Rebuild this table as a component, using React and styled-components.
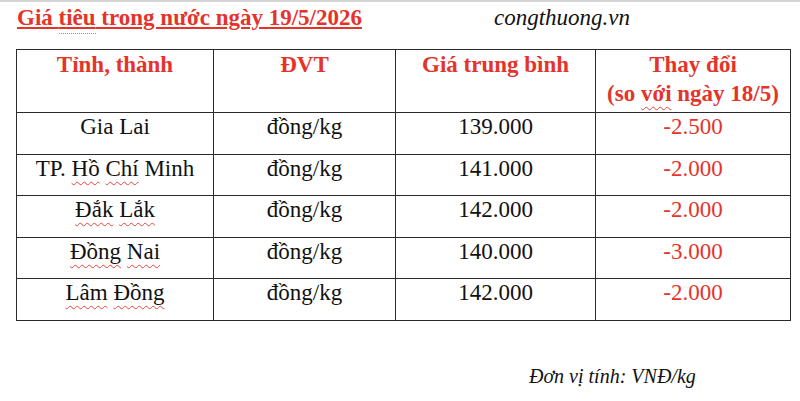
import React from "react";
import styled, { createGlobalStyle } from "styled-components";

const GlobalStyle = createGlobalStyle`
  html, body {
    margin: 0;
    padding: 0;
    background: #ffffff;
  }
  body {
    font-family: "Liberation Serif", "Times New Roman", serif;
  }
`;

const RED = "#e5332a";

const rows = [
  { place: [{ t: "Gia Lai" }], price: "139.000", change: "-2.500" },
  {
    place: [{ t: "TP. " }, { t: "Hồ", wavy: true }, { t: " " }, { t: "Chí", wavy: true }, { t: " Minh" }],
    price: "141.000",
    change: "-2.000",
  },
  {
    place: [{ t: "Đắk", wavy: true }, { t: " " }, { t: "Lắk", wavy: true }],
    price: "142.000",
    change: "-2.000",
  },
  {
    place: [{ t: "Đồng", wavy: true }, { t: " " }, { t: "Nai", wavy: true }],
    price: "140.000",
    change: "-3.000",
  },
  {
    place: [{ t: "Lâm", wavy: true }, { t: " " }, { t: "Đồng", wavy: true }],
    price: "142.000",
    change: "-2.000",
  },
];

const App = () => {
  return (
    <>
      <GlobalStyle />
      <Page>
        <TopBar>
          <Title>
            Giá <Dotted>tiêu</Dotted> trong nước ngày 19/5/2026
          </Title>
          <Site>congthuong.vn</Site>
        </TopBar>

        <Table>
          <colgroup>
            <col style={{ width: 197 }} />
            <col style={{ width: 182 }} />
            <col style={{ width: 200 }} />
            <col style={{ width: 195 }} />
          </colgroup>
          <thead>
            <tr>
              <HeadCell>Tỉnh, thành</HeadCell>
              <HeadCell>ĐVT</HeadCell>
              <HeadCell>Giá trung bình</HeadCell>
              <HeadCell>
                Thay đổi
                <br />
                (so <Wavy>với</Wavy> ngày 18/5)
              </HeadCell>
            </tr>
          </thead>
          <tbody>
            {rows.map((row, i) => (
              <tr key={i}>
                <Cell>
                  {row.place.map((p, j) =>
                    p.wavy ? <Wavy key={j}>{p.t}</Wavy> : <span key={j}>{p.t}</span>
                  )}
                </Cell>
                <Cell>đồng/kg</Cell>
                <Cell>{row.price}</Cell>
                <Cell red>{row.change}</Cell>
              </tr>
            ))}
          </tbody>
        </Table>

        <Footer>
          <Note>Đơn vị tính: VNĐ/kg</Note>
        </Footer>
      </Page>
    </>
  );
};

export default App;

const Page = styled.div`
  width: 800px;
  height: 401px;
  box-sizing: border-box;
  border-top: 2px solid #d4d4d4;
  overflow: hidden;
`;

const TopBar = styled.div`
  display: flex;
  align-items: baseline;
  height: 47px;
  padding-left: 17px;
  box-sizing: border-box;
  padding-top: 3px;
`;

const Title = styled.h1`
  margin: 0;
  width: 477px;
  font-size: 23px;
  line-height: 26px;
  font-weight: bold;
  color: ${RED};
  text-decoration: underline;
  text-decoration-thickness: 2px;
  text-underline-offset: 2px;
  white-space: nowrap;
`;

const Dotted = styled.span`
  position: relative;

  &::after {
    content: "";
    position: absolute;
    left: 0;
    right: 0;
    bottom: -4px;
    border-bottom: 1px dotted #8a8a8a;
  }
`;

const Site = styled.span`
  font-size: 23px;
  line-height: 26px;
  font-style: italic;
  color: #111111;
`;

const Table = styled.table`
  margin-left: 16px;
  width: 774px;
  table-layout: fixed;
  border-collapse: collapse;
  border: 1.5px solid #2b2b2b;
`;

const HeadCell = styled.th`
  height: 62px;
  box-sizing: border-box;
  padding: 0 4px 4px;
  vertical-align: top;
  border: 1.5px solid #2b2b2b;
  color: ${RED};
  font-size: 23px;
  font-weight: bold;
  line-height: 29px;
  text-align: center;
  white-space: nowrap;
`;

const Cell = styled.td`
  height: 41.6px;
  box-sizing: border-box;
  padding: 2px 4px 0;
  vertical-align: top;
  border: 1.5px solid #2b2b2b;
  color: ${(props) => (props.red ? RED : "#111111")};
  font-size: 23px;
  line-height: 24px;
  text-align: center;
  white-space: nowrap;
`;

const Wavy = styled.span`
  text-decoration: underline wavy #e2453c;
  text-decoration-thickness: 1px;
  text-underline-offset: 5px;
`;

const Footer = styled.div`
  display: flex;
  padding-left: 529px;
  padding-top: 44px;
`;

const Note = styled.span`
  font-size: 20px;
  font-style: italic;
  color: #111111;
`;
